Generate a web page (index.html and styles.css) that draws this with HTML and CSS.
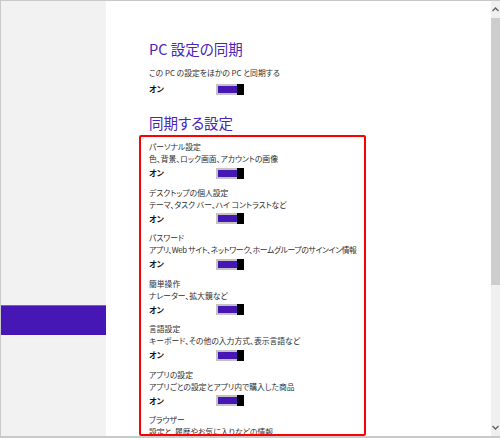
FILE: index.html
```html
<!DOCTYPE html>
<html lang="ja">
<head>
<meta charset="utf-8">
<link rel="stylesheet" href="styles.css">
</head>
<body>
<div class="window">
  <aside class="sidebar">
    <div class="selected"></div>
  </aside>
  <main class="main">
    <h1 class="heading">PC 設定の同期</h1>
    <p class="text">この PC の設定をほかの PC と同期する</p>
    <div class="row"><span class="on">オン</span><span class="toggle"><span class="track"></span><span class="knob"></span></span></div>
    <h2 class="heading heading-2">同期する設定</h2>
    <section class="box">
      <div class="item">
        <div class="text">パーソナル設定</div>
        <div class="text">色、背景、ロック画面、アカウントの画像</div>
        <div class="row"><span class="on">オン</span><span class="toggle"><span class="track"></span><span class="knob"></span></span></div>
      </div>
      <div class="item">
        <div class="text">デスクトップの個人設定</div>
        <div class="text">テーマ、タスク バー、ハイ コントラストなど</div>
        <div class="row"><span class="on">オン</span><span class="toggle"><span class="track"></span><span class="knob"></span></span></div>
      </div>
      <div class="item">
        <div class="text">パスワード</div>
        <div class="text tight">アプリ、Web サイト、ネットワーク、ホームグループのサインイン情報</div>
        <div class="row"><span class="on">オン</span><span class="toggle"><span class="track"></span><span class="knob"></span></span></div>
      </div>
      <div class="item">
        <div class="text">簡単操作</div>
        <div class="text">ナレーター、拡大鏡など</div>
        <div class="row"><span class="on">オン</span><span class="toggle"><span class="track"></span><span class="knob"></span></span></div>
      </div>
      <div class="item">
        <div class="text">言語設定</div>
        <div class="text">キーボード、その他の入力方式、表示言語など</div>
        <div class="row"><span class="on">オン</span><span class="toggle"><span class="track"></span><span class="knob"></span></span></div>
      </div>
      <div class="item">
        <div class="text">アプリの設定</div>
        <div class="text">アプリごとの設定とアプリ内で購入した商品</div>
        <div class="row"><span class="on">オン</span><span class="toggle"><span class="track"></span><span class="knob"></span></span></div>
      </div>
      <div class="item">
        <div class="text">ブラウザー</div>
        <div class="text">設定と、履歴やお気に入りなどの情報</div>
        <div class="row"><span class="on">オン</span><span class="toggle"><span class="track"></span><span class="knob"></span></span></div>
      </div>
    </section>
  </main>
  <div class="scrollbar">
    <div class="arrow">
      <svg width="7" height="5" viewBox="0 0 7 5"><polyline points="0.5,4 3.5,1 6.5,4" fill="none" stroke="#606060" stroke-width="1.3"/></svg>
    </div>
    <div class="thumb"></div>
    <div class="track-rest"></div>
    <div class="arrow">
      <svg width="7" height="5" viewBox="0 0 7 5"><polyline points="0.5,1 3.5,4 6.5,1" fill="none" stroke="#606060" stroke-width="1.3"/></svg>
    </div>
  </div>
</div>
</body>
</html>
```
FILE: styles.css
```css
html, body {
  margin: 0;
  padding: 0;
  background: #ffffff;
}

.window {
  width: 500px;
  height: 438px;
  box-sizing: border-box;
  border-top: 1px solid #c9c9c9;
  border-left: 1px solid #c9c9c9;
  border-bottom: 2px solid #c9c9c9;
  display: flex;
  overflow: hidden;
  font-family: "Noto Sans CJK JP", "Noto Sans", sans-serif;
  font-feature-settings: "palt";
  color: #2e2e2e;
}

.sidebar {
  width: 105px;
  flex: none;
  background: #f2f2f2;
}

.selected {
  margin-top: 304px;
  height: 30px;
  background: #4617b4;
  border-top: 1px solid #7a5ccf;
  box-sizing: border-box;
}

.main {
  flex: 1;
  padding-left: 43px;
  padding-top: 38px;
  overflow: hidden;
  background: #ffffff;
}

.heading {
  margin: 0;
  font-size: 14.5px;
  line-height: 20px;
  font-weight: normal;
  color: #4a24b8;
}

.heading-2 {
  margin-top: 18px;
}

.text {
  margin: 0;
  font-size: 7.8px;
  line-height: 12px;
  white-space: nowrap;
}

.tight {
  letter-spacing: -0.35px;
}

.main > .text {
  margin-top: 8px;
}

.row {
  display: flex;
  align-items: center;
  height: 12px;
  margin-top: 4px;
}

.on {
  width: 67px;
  font-size: 8px;
  font-weight: bold;
  color: #111111;
  line-height: 12px;
}

.toggle {
  display: flex;
  width: 28px;
  height: 11px;
}

.track {
  flex: 1;
  background: #4617b4;
  border: 2px solid #c3c3c3;
  border-right: 0;
}

.knob {
  width: 7px;
  background: #000000;
}

.box {
  margin-top: 2px;
  margin-left: -10px;
  width: 227px;
  height: 301px;
  box-sizing: border-box;
  border: 2px solid #ff0000;
  border-radius: 2px;
  padding: 4px 0 0 8px;
  overflow: hidden;
}

.item {
  padding-bottom: 6.5px;
}

.item .row {
  margin-top: 1px;
  height: 14px;
}

.scrollbar {
  width: 9px;
  flex: none;
  background: #f0f0f0;
  display: flex;
  flex-direction: column;
}

.arrow {
  height: 17px;
  display: flex;
  align-items: center;
  justify-content: center;
}

.thumb {
  height: 267px;
  background: #cdcdcd;
}

.track-rest {
  flex: 1;
}
```
